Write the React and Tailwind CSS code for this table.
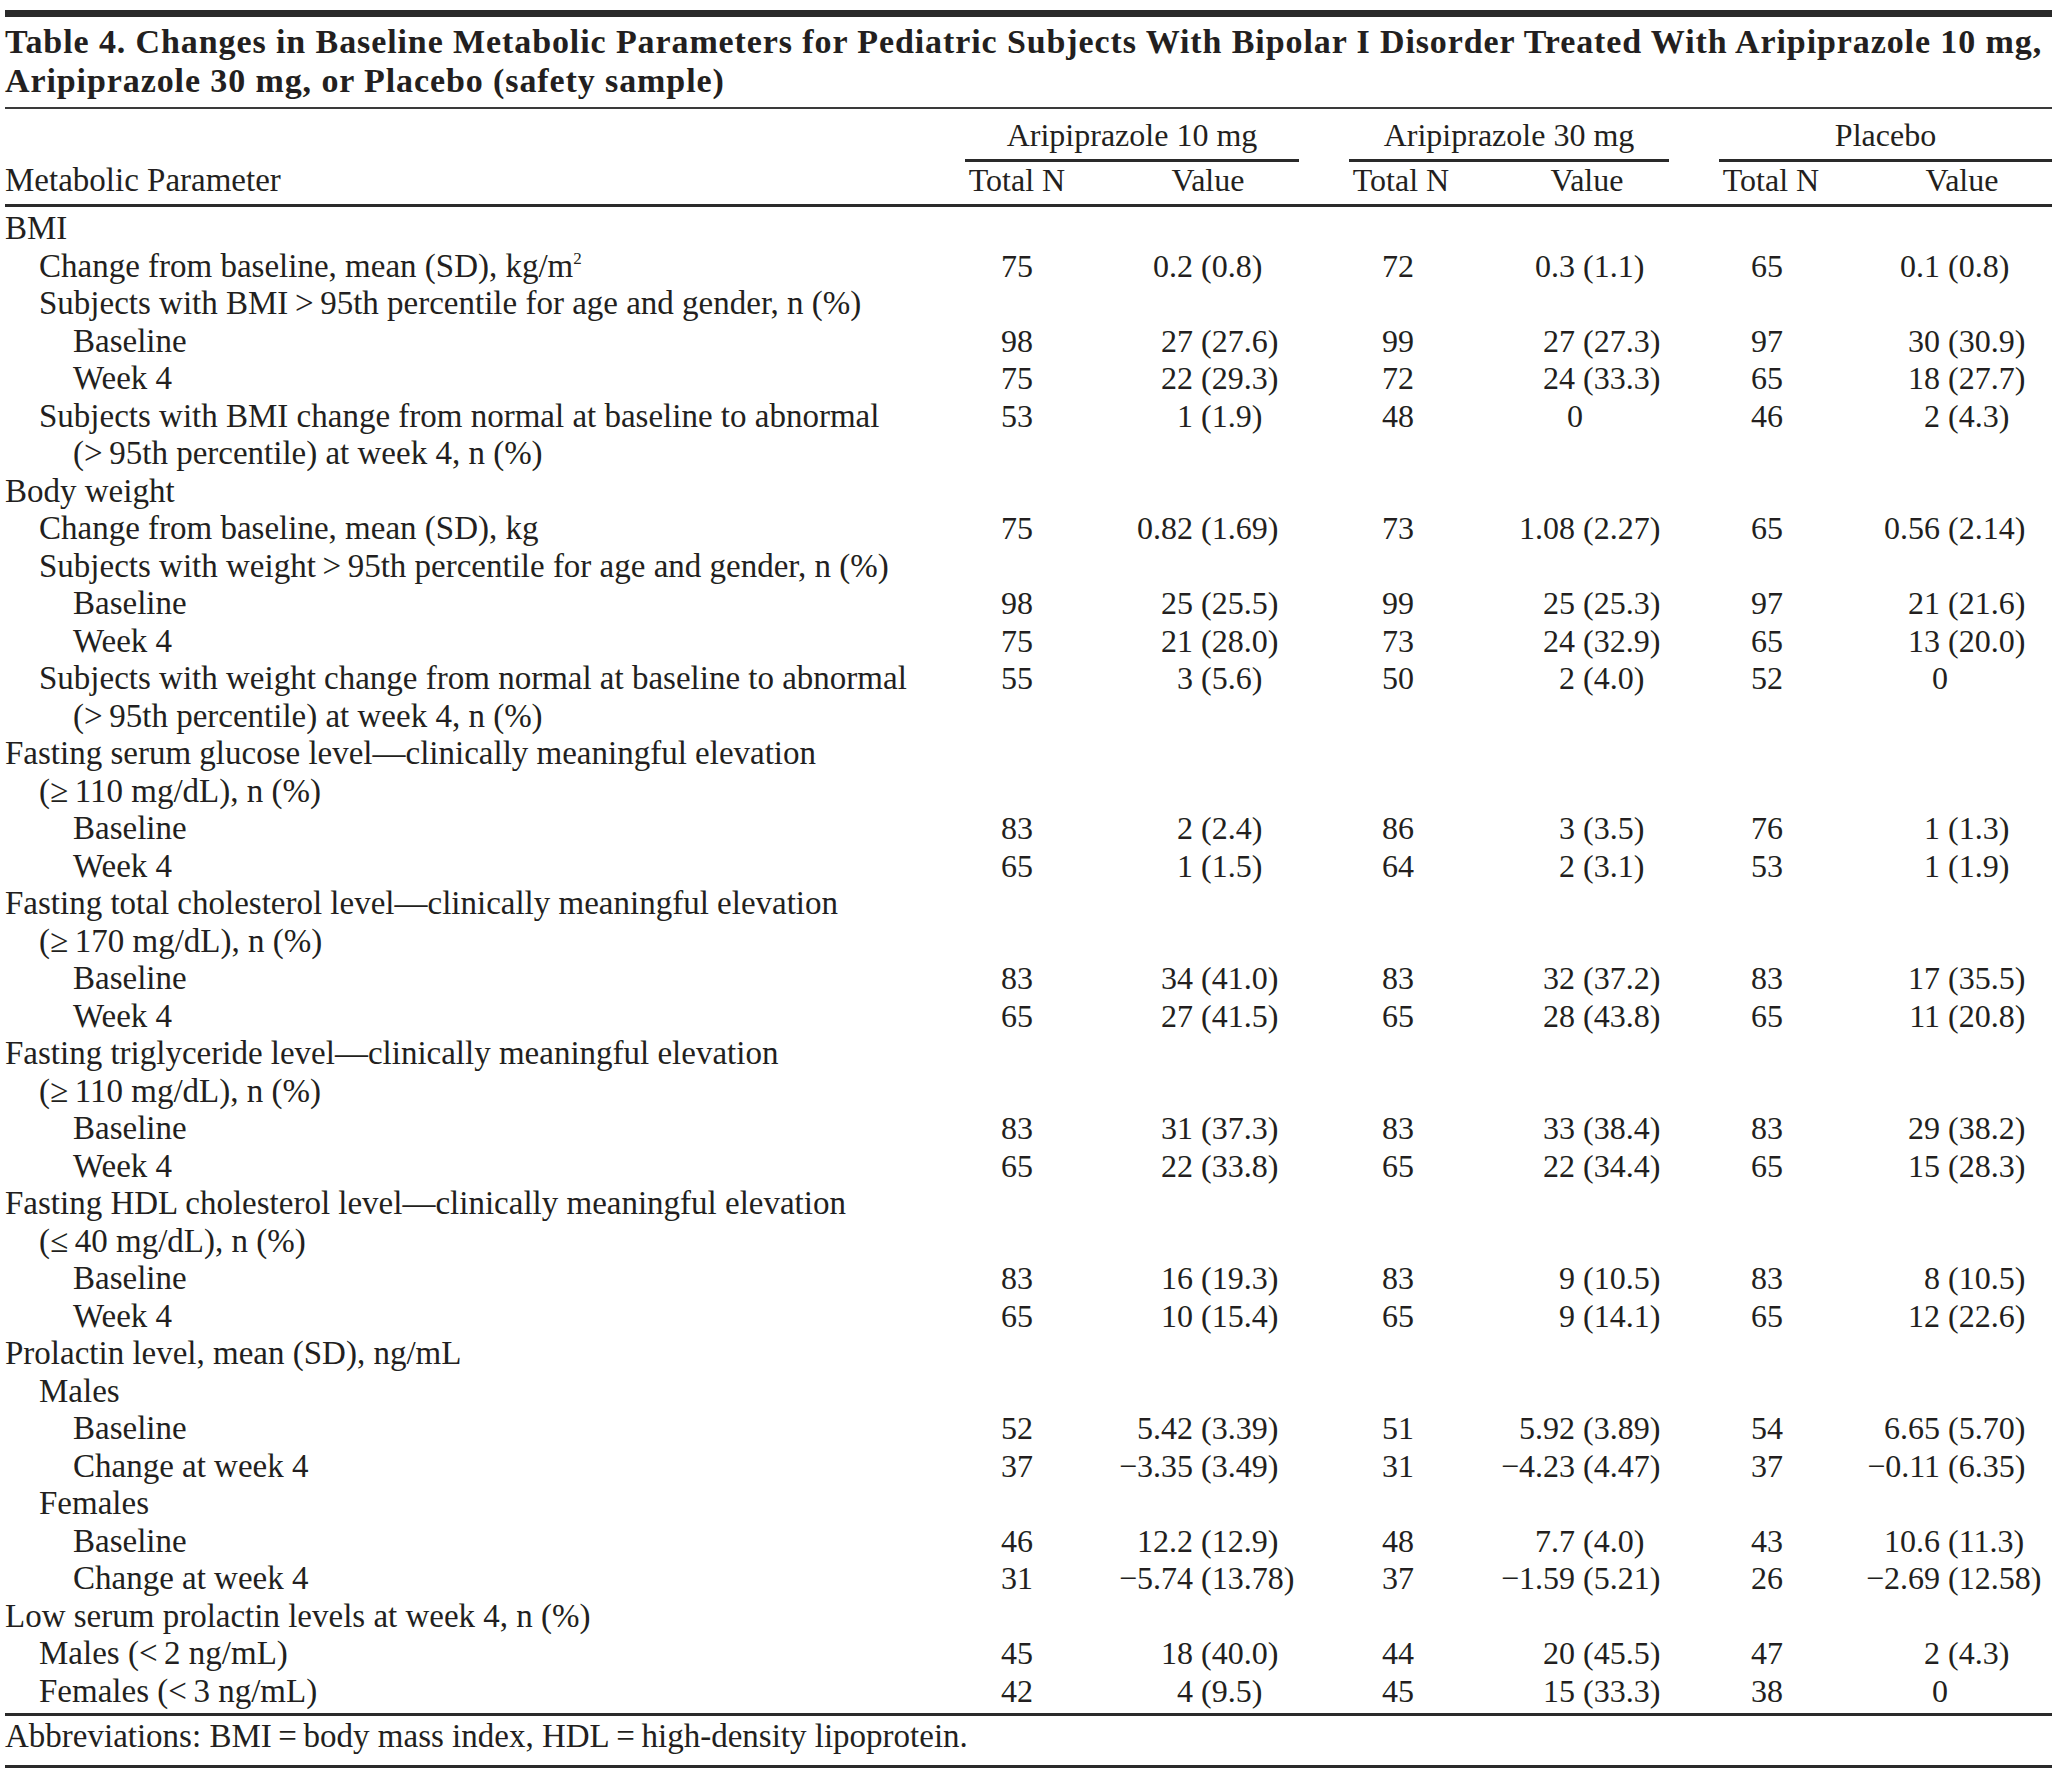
import React from "react";

const groups = [
  { name: "Aripiprazole 10 mg", w: "w-[334px]", valW: "w-[230px]", headPl: "pl-[48px]", alignW: "w-[124px]", alignW0: "w-[132px]", nPad: "" },
  { name: "Aripiprazole 30 mg", w: "w-[320px]", valW: "w-[216px]", headPl: "pl-[52px]", alignW: "w-[122px]", alignW0: "w-[130px]", nPad: "pr-[6px]" },
  { name: "Placebo", w: "w-[333px]", valW: "w-[229px]", headPl: "pl-[49px]", alignW: "w-[117px]", alignW0: "w-[125px]", nPad: "pr-[8px]" },
];

const indent = ["pl-0", "pl-[34px]", "pl-[68px]", "pl-[102px]"];

// lvl = indent level, lines = label lines (2nd line hangs one level deeper), v = [n, value] x 3
const rows = [
  { lvl: 0, lines: ["BMI"] },
  { lvl: 1, lines: ["Change from baseline, mean (SD), kg/m"], sup: "2", v: ["75", "0.2 (0.8)", "72", "0.3 (1.1)", "65", "0.1 (0.8)"] },
  { lvl: 1, lines: ["Subjects with BMI\u2009>\u200995th percentile for age and gender, n (%)"] },
  { lvl: 2, lines: ["Baseline"], v: ["98", "27 (27.6)", "99", "27 (27.3)", "97", "30 (30.9)"] },
  { lvl: 2, lines: ["Week 4"], v: ["75", "22 (29.3)", "72", "24 (33.3)", "65", "18 (27.7)"] },
  { lvl: 1, lines: ["Subjects with BMI change from normal at baseline to abnormal", "(>\u200995th percentile) at week 4, n (%)"], v: ["53", "1 (1.9)", "48", "0", "46", "2 (4.3)"] },
  { lvl: 0, lines: ["Body weight"] },
  { lvl: 1, lines: ["Change from baseline, mean (SD), kg"], v: ["75", "0.82 (1.69)", "73", "1.08 (2.27)", "65", "0.56 (2.14)"] },
  { lvl: 1, lines: ["Subjects with weight\u2009>\u200995th percentile for age and gender, n (%)"] },
  { lvl: 2, lines: ["Baseline"], v: ["98", "25 (25.5)", "99", "25 (25.3)", "97", "21 (21.6)"] },
  { lvl: 2, lines: ["Week 4"], v: ["75", "21 (28.0)", "73", "24 (32.9)", "65", "13 (20.0)"] },
  { lvl: 1, lines: ["Subjects with weight change from normal at baseline to abnormal", "(>\u200995th percentile) at week 4, n (%)"], v: ["55", "3 (5.6)", "50", "2 (4.0)", "52", "0"] },
  { lvl: 0, lines: ["Fasting serum glucose level\u2014clinically meaningful elevation", "(\u2265\u2009110 mg/dL), n (%)"] },
  { lvl: 2, lines: ["Baseline"], v: ["83", "2 (2.4)", "86", "3 (3.5)", "76", "1 (1.3)"] },
  { lvl: 2, lines: ["Week 4"], v: ["65", "1 (1.5)", "64", "2 (3.1)", "53", "1 (1.9)"] },
  { lvl: 0, lines: ["Fasting total cholesterol level\u2014clinically meaningful elevation", "(\u2265\u2009170 mg/dL), n (%)"] },
  { lvl: 2, lines: ["Baseline"], v: ["83", "34 (41.0)", "83", "32 (37.2)", "83", "17 (35.5)"] },
  { lvl: 2, lines: ["Week 4"], v: ["65", "27 (41.5)", "65", "28 (43.8)", "65", "11 (20.8)"] },
  { lvl: 0, lines: ["Fasting triglyceride level\u2014clinically meaningful elevation", "(\u2265\u2009110 mg/dL), n (%)"] },
  { lvl: 2, lines: ["Baseline"], v: ["83", "31 (37.3)", "83", "33 (38.4)", "83", "29 (38.2)"] },
  { lvl: 2, lines: ["Week 4"], v: ["65", "22 (33.8)", "65", "22 (34.4)", "65", "15 (28.3)"] },
  { lvl: 0, lines: ["Fasting HDL cholesterol level\u2014clinically meaningful elevation", "(\u2264\u200940 mg/dL), n (%)"] },
  { lvl: 2, lines: ["Baseline"], v: ["83", "16 (19.3)", "83", "9 (10.5)", "83", "8 (10.5)"] },
  { lvl: 2, lines: ["Week 4"], v: ["65", "10 (15.4)", "65", "9 (14.1)", "65", "12 (22.6)"] },
  { lvl: 0, lines: ["Prolactin level, mean (SD), ng/mL"] },
  { lvl: 1, lines: ["Males"] },
  { lvl: 2, lines: ["Baseline"], v: ["52", "5.42 (3.39)", "51", "5.92 (3.89)", "54", "6.65 (5.70)"] },
  { lvl: 2, lines: ["Change at week 4"], v: ["37", "\u22123.35 (3.49)", "31", "\u22124.23 (4.47)", "37", "\u22120.11 (6.35)"] },
  { lvl: 1, lines: ["Females"] },
  { lvl: 2, lines: ["Baseline"], v: ["46", "12.2 (12.9)", "48", "7.7 (4.0)", "43", "10.6 (11.3)"] },
  { lvl: 2, lines: ["Change at week 4"], v: ["31", "\u22125.74 (13.78)", "37", "\u22121.59 (5.21)", "26", "\u22122.69 (12.58)"] },
  { lvl: 0, lines: ["Low serum prolactin levels at week 4, n (%)"] },
  { lvl: 1, lines: ["Males (<\u20092 ng/mL)"], v: ["45", "18 (40.0)", "44", "20 (45.5)", "47", "2 (4.3)"] },
  { lvl: 1, lines: ["Females (<\u20093 ng/mL)"], v: ["42", "4 (9.5)", "45", "15 (33.3)", "38", "0"] },
];

// first number right-aligned on a tab stop, the (…) part hangs to its right
const Val = ({ v, g }) => {
  if (!v) return null;
  const i = v.indexOf(" ");
  const head = i < 0 ? v : v.slice(0, i);
  const tail = i < 0 ? "" : v.slice(i);
  return (
    <div className="flex whitespace-pre">
      <span className={`${tail ? g.alignW : g.alignW0} shrink-0 text-right`}>{head}</span>
      <span>{tail}</span>
    </div>
  );
};

const Row = ({ row }) => (
  <div className="flex">
    <div className="w-[960px] shrink-0 text-[33px]">
      {row.lines.map((line, k) => (
        <div key={k} className={indent[row.lvl + (k > 0 ? 1 : 0)]}>
          {line}
          {k === 0 && row.sup && <sup className="text-[17px] top-[-0.75em]">{row.sup}</sup>}
        </div>
      ))}
    </div>
    <div className="flex gap-[50px]">
      {groups.map((g, gi) => (
        <div key={gi} className={`flex shrink-0 ${g.w}`}>
          <div className={`w-[104px] shrink-0 text-center ${g.nPad}`}>{row.v ? row.v[gi * 2] : ""}</div>
          <div className={g.valW}>
            <Val v={row.v ? row.v[gi * 2 + 1] : null} g={g} />
          </div>
        </div>
      ))}
    </div>
  </div>
);

export default function App() {
  return (
    <div className="w-[2054px] min-h-[1776px] bg-white pl-[5px] pr-[2px] text-[#231f20] font-['Liberation_Serif',serif] text-[32px] leading-[37.5px]">
      <div className="h-[10px]" />
      <div className="h-[7px] bg-[#2a2a2a]" />

      <div className="mt-[5px] text-[34px] font-semibold leading-[39px] tracking-[0.9px]">
        <div>
          Table 4. Changes in Baseline Metabolic Parameters for Pediatric Subjects With Bipolar I Disorder Treated With Aripiprazole 10 mg,
        </div>
        <div>Aripiprazole 30 mg, or Placebo (safety sample)</div>
      </div>

      <div className="mt-[7px] h-[2px] bg-[#3a3a3a]" />

      {/* column headers */}
      <div className="mt-[8px] flex">
        <div className="w-[960px] shrink-0" />
        <div className="flex gap-[50px]">
          {groups.map((g, gi) => (
            <div key={gi} className={`shrink-0 ${g.w}`}>
              <div className="text-center">{g.name}</div>
              <div className="mt-[4px] h-[3px] bg-[#2a2a2a]" />
            </div>
          ))}
        </div>
      </div>
      <div className="flex">
        <div className="w-[960px] shrink-0 text-[33px]">Metabolic Parameter</div>
        <div className="flex gap-[50px]">
          {groups.map((g, gi) => (
            <div key={gi} className={`flex shrink-0 ${g.w}`}>
              <div className="w-[104px] shrink-0 text-center">Total N</div>
              <div className={`${g.valW} ${g.headPl} text-center`}>Value</div>
            </div>
          ))}
        </div>
      </div>

      <div className="mt-[5px] h-[3px] bg-[#2a2a2a]" />

      <div className="mt-[3px]">
        {rows.map((r, i) => (
          <Row key={i} row={r} />
        ))}
      </div>

      <div className="mt-[3px] h-[3px] bg-[#2a2a2a]" />
      <div className="mt-[5px] text-[33px] leading-[30px]">
        Abbreviations: BMI{"\u2009=\u2009"}body mass index, HDL{"\u2009=\u2009"}high-density lipoprotein.
      </div>
      <div className="mt-[14px] h-[3px] bg-[#2a2a2a]" />
    </div>
  );
}
